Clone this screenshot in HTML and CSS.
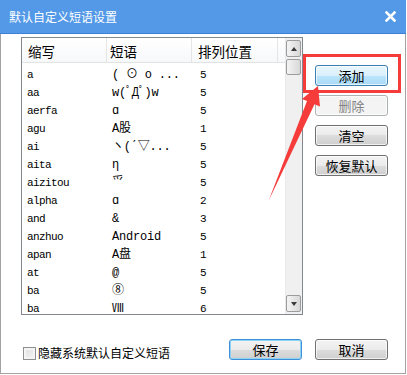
FILE: index.html
```html
<!DOCTYPE html>
<html lang="zh-CN">
<head>
  <meta charset="UTF-8" />
  <title>默认自定义短语设置</title>
  <link rel="stylesheet" href="styles.css">
</head>
<body>
  <div class="window">
    <div class="titlebar">
      <span class="title">默认自定义短语设置</span>
      <svg class="close" width="11" height="11" viewBox="0 0 11 11">
        <path d="M1.5 1.5 L9.5 9.5 M9.5 1.5 L1.5 9.5" stroke="#fff" stroke-width="2.6" stroke-linecap="square" />
      </svg>
    </div>

    <div class="main">
      <!-- lista delle frasi -->
      <div class="listbox">
        <div class="grid">
          <div class="head">
            <div class="hcol c1">缩写</div>
            <div class="hcol c2">短语</div>
            <div class="hcol c3">排列位置</div>
            <div class="hcol fill"></div>
          </div>
          <div class="rows">
            <div class="row"><span class="c1">a</span><span class="c2">( ⊙ o ...</span><span class="c3">5</span></div>
            <div class="row"><span class="c1">aa</span><span class="c2">w(ﾟДﾟ)w</span><span class="c3">5</span></div>
            <div class="row"><span class="c1">aerfa</span><span class="c2">ɑ</span><span class="c3">5</span></div>
            <div class="row"><span class="c1">agu</span><span class="c2">A股</span><span class="c3">1</span></div>
            <div class="row"><span class="c1">ai</span><span class="c2">ヽ(ˊ▽...</span><span class="c3">5</span></div>
            <div class="row"><span class="c1">aita</span><span class="c2">η</span><span class="c3">5</span></div>
            <div class="row"><span class="c1">aizitou</span><span class="c2">爫</span><span class="c3">5</span></div>
            <div class="row"><span class="c1">alpha</span><span class="c2">ɑ</span><span class="c3">2</span></div>
            <div class="row"><span class="c1">and</span><span class="c2">&amp;</span><span class="c3">3</span></div>
            <div class="row"><span class="c1">anzhuo</span><span class="c2">Android</span><span class="c3">5</span></div>
            <div class="row"><span class="c1">apan</span><span class="c2">A盘</span><span class="c3">1</span></div>
            <div class="row"><span class="c1">at</span><span class="c2">@</span><span class="c3">5</span></div>
            <div class="row"><span class="c1">ba</span><span class="c2">⑧</span><span class="c3">5</span></div>
            <div class="row"><span class="c1">ba</span><span class="c2">Ⅷ</span><span class="c3">6</span></div>
          </div>
        </div>
        <div class="scrollbar">
          <div class="sb-btn up"><i></i></div>
          <div class="thumb"></div>
          <div class="track"></div>
          <div class="sb-btn down"><i></i></div>
        </div>
      </div>

      <div class="side">
        <button class="btn hot">添加</button>
        <button class="btn" disabled>删除</button>
        <button class="btn">清空</button>
        <button class="btn">恢复默认</button>
      </div>
    </div>

    <div class="footer">
      <label class="check"><span class="box"></span>隐藏系统默认自定义短语</label>
      <button class="btn default save">保存</button>
      <button class="btn cancel">取消</button>
    </div>

    <!-- annotazione rossa sopra il dialogo -->
    <svg class="annot" width="407" height="375" viewBox="0 0 407 375">
      <rect x="304.5" y="55.5" width="95" height="36" fill="none" stroke="#f63b3b" stroke-width="3" />
      <polygon points="318,86 320,106.5 314.5,104.2 268.5,201 307,101 302,99" fill="#f63b3b" />
    </svg>
  </div>
</body>
</html>
```

FILE: styles.css
```css
body {
  margin: 0;
  background: #fff;
  font-family: "Noto Sans CJK SC", "Noto Sans", sans-serif;
}
.window {
  position: relative;
  width: 406px;
  height: 374px;
  box-sizing: border-box;
  border: 1px solid #a3a3a3;
  border-top: none;
  background: #fff;
}
.titlebar {
  height: 33px;
  margin: 0 -1px;
  background: #5399e7;
  border-bottom: 1px solid #3f80d6;
  display: flex;
  align-items: center;
  justify-content: space-between;
  padding: 0 10px 0 9px;
}
.title {
  color: #fff;
  font-size: 12px;
  line-height: 33px;
}
.close {
  display: block;
}
.main {
  display: flex;
  padding: 3px 0 0 20px;
}
.listbox {
  width: 282px;
  height: 278px;
  box-sizing: border-box;
  border: 1px solid #828790;
  display: flex;
  overflow: hidden;
}
.grid {
  flex: 1;
  overflow: hidden;
}
.head {
  display: flex;
  height: 25px;
  box-sizing: border-box;
  border-bottom: 1px solid #e3e3e3;
  background: linear-gradient(#ffffff, #f7f8fa);
}
.hcol {
  box-sizing: border-box;
  border-right: 1px solid #e5e5e5;
  font-size: 13.5px;
  line-height: 19px;
  padding-top: 4px;
  color: #000;
}
.hcol.c1 { width: 85px; padding-left: 6px; }
.hcol.c2 { width: 85px; padding-left: 3px; }
.hcol.c3 { width: 86px; padding-left: 6px; }
.hcol.fill { flex: 1; border-right: none; }
.rows {
  padding-top: 3px;
}
.row {
  display: flex;
  height: 18px;
  line-height: 18px;
  white-space: nowrap;
  color: #000;
  font-family: "Liberation Mono", "Noto Sans CJK SC", monospace;
}
.row span {
  box-sizing: border-box;
  overflow: hidden;
}
.row .c1 { width: 85px; padding-left: 5px; font-size: 11px; letter-spacing: -0.6px; }
.row .c2 { width: 85px; padding-left: 5px; font-size: 12px; letter-spacing: -0.2px; }
.row .c3 { width: 86px; padding-left: 8px; font-size: 11px; }
.scrollbar {
  width: 17px;
  display: flex;
  flex-direction: column;
  padding: 2px 0 2px 0;
  box-sizing: border-box;
  background: #f0f0f0;
  border-left: 1px solid #e9e9e9;
}
.sb-btn,
.thumb {
  width: 15px;
  height: 17px;
  box-sizing: border-box;
  border: 1px solid #9c9c9c;
  border-radius: 2px;
  background: linear-gradient(90deg, #f4f4f4, #e6e6e6 50%, #d8d8d8);
  display: flex;
  align-items: center;
  justify-content: center;
}
.thumb {
  margin-top: 2px;
  height: 16px;
}
.track {
  flex: 1;
}
.sb-btn i {
  width: 0;
  height: 0;
  border-left: 3.5px solid transparent;
  border-right: 3.5px solid transparent;
}
.sb-btn.up i { border-bottom: 4px solid #3a3a3a; }
.sb-btn.down i { border-top: 4px solid #3a3a3a; }
.side {
  display: flex;
  flex-direction: column;
  gap: 9px;
  padding-top: 28px;
  margin-left: 12px;
}
.btn {
  width: 73px;
  height: 21px;
  box-sizing: border-box;
  padding: 0;
  margin: 0;
  border: 1px solid #707070;
  border-radius: 3px;
  background: linear-gradient(#f3f3f3, #ebebeb 50%, #dddddd 50%, #cfcfcf);
  box-shadow: inset 0 0 0 1px rgba(255, 255, 255, 0.7);
  font-family: "Noto Sans CJK SC", sans-serif;
  font-size: 13px;
  line-height: 19px;
  color: #000;
}
.btn.hot {
  border-color: #3c7fb1;
  background: linear-gradient(#eaf6fd, #d9f0fc 50%, #bee6fd 50%, #a7d9f5);
}
.btn:disabled {
  border-color: #adb2b5;
  background: #f4f4f4;
  color: #838383;
}
.btn.default {
  border-color: #3c8fd8;
  box-shadow: inset 0 0 0 1px #8fd3f7;
}
.footer {
  display: flex;
  align-items: flex-end;
  margin-top: 24px;
  padding: 0 17px 0 22px;
}
.check {
  display: flex;
  align-items: center;
  gap: 2px;
  font-size: 12px;
  line-height: 14px;
  color: #000;
}
.box {
  width: 13px;
  height: 13px;
  box-sizing: border-box;
  border: 1px solid #8e8f8f;
  background: linear-gradient(135deg, #dcdcdc, #f6f6f6);
  box-shadow: inset 0 0 0 2px #f4f4f4;
}
.save {
  margin-left: auto;
}
.cancel {
  margin-left: 13px;
}
.annot {
  position: absolute;
  top: 0;
  left: -1px;
  pointer-events: none;
}
```
